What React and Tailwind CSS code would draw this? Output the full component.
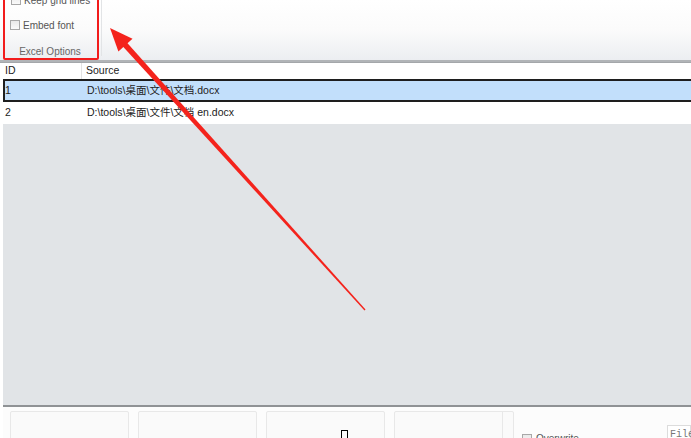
import React from "react";

const font = { fontFamily: '"Liberation Sans", "Noto Sans CJK SC", sans-serif' };

function Check({ className = "" }) {
  return (
    <span
      className={`inline-block w-[10px] h-[10px] border border-[#a8a8a8] bg-gradient-to-b from-[#e9e9e9] to-[#fafafa] ${className}`}
    />
  );
}

export default function App() {
  // arrow geometry
  const tip = [110, 28];
  const tail = [365, 310];
  const dx = tail[0] - tip[0];
  const dy = tail[1] - tip[1];
  const len = Math.hypot(dx, dy);
  const u = [dx / len, dy / len];
  const p = [-u[1], u[0]];
  const headLen = 23;
  const headHalf = 9.5;
  const base = [tip[0] + u[0] * headLen, tip[1] + u[1] * headLen];
  const w1 = [base[0] + p[0] * headHalf, base[1] + p[1] * headHalf];
  const w2 = [base[0] - p[0] * headHalf, base[1] - p[1] * headHalf];
  const sb = [tip[0] + u[0] * (headLen - 3), tip[1] + u[1] * (headLen - 3)];
  const sw = 2.8;
  const tw = 0.7;
  const s1 = [sb[0] + p[0] * sw, sb[1] + p[1] * sw];
  const s2 = [sb[0] - p[0] * sw, sb[1] - p[1] * sw];
  const t1 = [tail[0] + p[0] * tw, tail[1] + p[1] * tw];
  const t2 = [tail[0] - p[0] * tw, tail[1] - p[1] * tw];
  const pts = (arr) => arr.map((a) => `${a[0].toFixed(1)},${a[1].toFixed(1)}`).join(" ");

  return (
    <div className="relative w-[691px] h-[438px] overflow-hidden bg-white flex flex-col" style={font}>
      {/* Ribbon */}
      <div className="h-[60px] shrink-0 bg-gradient-to-b from-white via-[#fbfbfb] to-[#eceef1] flex">
        <div className="w-[96px] ml-[3px] flex flex-col text-[10px] text-[#555]">
          <div className="flex items-center gap-[3px] pl-[8px] mt-[-6px] h-[12px]">
            <Check />
            <span>Keep grid lines</span>
          </div>
          <div className="flex items-center gap-[3px] pl-[7px] mt-[13px] h-[12px]">
            <Check />
            <span>Embed font</span>
          </div>
          <div className="mt-[13px] text-center text-[10px] text-[#666] pr-[2px]">Excel Options</div>
        </div>
        <div className="w-px h-[56px] bg-[#e2e4e6] ml-[2px]" />
      </div>
      <div className="h-[3px] shrink-0 bg-[#b1b4b7] border-b border-[#a4a7aa]" />

      {/* Grid */}
      <div className="flex-1 flex flex-col pl-[3px] bg-white text-[10.5px] text-[#222]">
        <div className="h-[16px] flex items-center shrink-0">
          <div className="w-[79px] pl-[2px] h-full flex items-center border-r border-[#e3e3e3]">ID</div>
          <div className="pl-[4px]">Source</div>
        </div>
        <div className="h-[23px] flex items-center shrink-0 bg-[#c2dffb] border-y-2 border-[#1e1e1e] border-l-2">
          <div className="w-[80px] pl-0">1</div>
          <div className="pl-[2px]">D:\tools\桌面\文件\文档.docx</div>
        </div>
        <div className="h-[22px] flex items-center shrink-0">
          <div className="w-[82px] pl-[2px]">2</div>
          <div className="pl-[2px]">D:\tools\桌面\文件\文档 en.docx</div>
        </div>
        <div className="flex-1 bg-[#e1e4e7]" />
      </div>

      {/* Bottom panel */}
      <div className="h-[33px] shrink-0 pl-[3px] bg-white">
        <div className="h-[2px] bg-[#8f9295]" />
        <div className="h-[31px] bg-[#fcfcfc] flex items-start pt-[4px] pl-[7px] gap-[9px] relative">
          <div className="w-[119px] h-[40px] border border-[#e8e8e8] rounded-[2px] bg-[#fafafa]" />
          <div className="w-[119px] h-[40px] border border-[#e8e8e8] rounded-[2px] bg-[#fafafa]" />
          <div className="w-[119px] h-[40px] border border-[#e8e8e8] rounded-[2px] bg-[#fafafa]" />
          <div className="w-[120px] h-[40px] border border-[#e8e8e8] rounded-[2px] bg-[#fafafa] flex justify-end">
            <div className="w-[11px] h-full border-l border-[#e8e8e8]" />
          </div>
          <div className="flex items-center gap-[4px] mt-[20px] ml-[-1px] text-[10px] text-[#555]">
            <Check />
            <span>Overwrite</span>
          </div>
          <div
            className="ml-auto mt-[14px] w-[24px] h-[20px] border border-[#dcdcdc] bg-white text-[10px] text-[#777] pl-[2px] pt-[1px]"
            style={{ fontFamily: '"Liberation Mono", monospace' }}
          >
            File
          </div>
          <div className="absolute left-[338px] top-[23px] w-[7px] h-[10px] border-t border-x border-black" />
        </div>
      </div>

      {/* Annotation: red box */}
      <div className="absolute left-[3px] top-[-10px] w-[96px] h-[70px] border-2 border-[#f21c1c] rounded-[2px] pointer-events-none" />

      {/* Annotation: arrow */}
      <svg className="absolute inset-0 pointer-events-none" width="691" height="438">
        <polygon points={pts([s1, t1, t2, s2])} fill="#f4231c" />
        <polygon points={pts([tip, w1, w2])} fill="#f4231c" />
      </svg>
    </div>
  );
}
